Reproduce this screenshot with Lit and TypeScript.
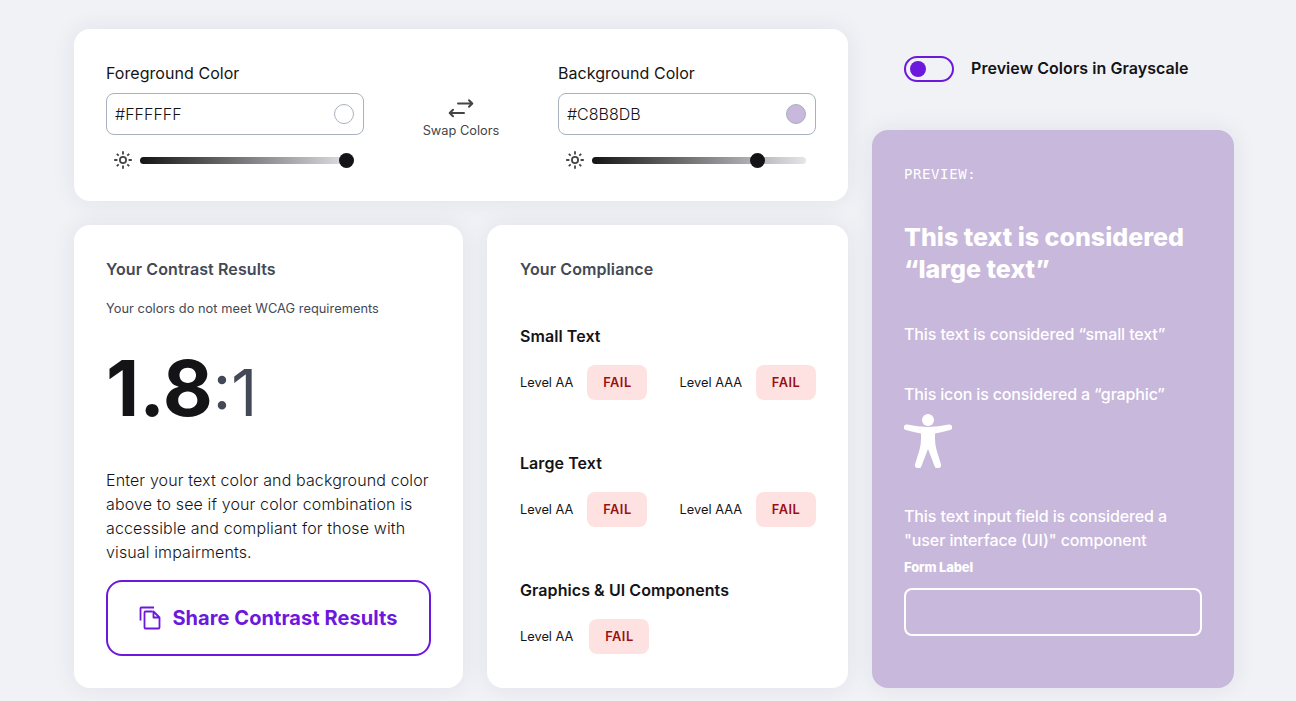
import { LitElement, html, css, svg } from "lit";
import { customElement, property, state } from "lit/decorators.js";

const sunIcon = svg`
  <circle cx="9" cy="9" r="3.1"></circle>
  <path d="M9 0.2V3.4M9 14.6V17.8M0.2 9H3.4M14.6 9H17.8M2.8 2.8L4.7 4.7M13.3 13.3L15.2 15.2M15.2 2.8L13.3 4.7M4.7 13.3L2.8 15.2"></path>
`;

@customElement("color-field")
export class ColorField extends LitElement {
  @property() label = "";
  @property() value = "";
  @property({ type: Number }) lightness = 1;

  static styles = css`
    :host { display: block; width: 258px; }
    .label { display: block; font-size: 16px; line-height: 24px; color: #141416; letter-spacing: 0.05px; }
    .box {
      display: flex; align-items: center; justify-content: space-between; box-sizing: border-box;
      height: 42px; margin-top: 8px; padding: 0 9px 0 8px; border: 1px solid #a9b0be; border-radius: 8px;
      font-size: 16px; font-weight: 300; color: #141416;
    }
    .swatch { box-sizing: border-box; width: 20px; height: 20px; border: 1px solid #a9b0be; border-radius: 50%; }
    .slider { display: flex; align-items: center; gap: 8px; height: 18px; margin-top: 16px; padding: 0 10px 0 8px; }
    .sun { width: 18px; height: 18px; fill: none; stroke: #454545; stroke-width: 1.8; }
    .track {
      display: flex; align-items: center; flex: 1; height: 7px; margin-top: 1px; border-radius: 4px;
      background: linear-gradient(90deg, #141416, #e5e6ea);
    }
    .thumb { width: 15px; height: 15px; border-radius: 50%; background: #141416; }
  `;

  render() {
    return html`
      <span class="label">${this.label}</span>
      <div class="box">
        <span>${this.value}</span>
        <span class="swatch" style="background:${this.value}"></span>
      </div>
      <div class="slider">
        <svg class="sun" viewBox="0 0 18 18">${sunIcon}</svg>
        <div class="track">
          <span class="thumb" style="margin-left:${this.lightness * 199}px"></span>
        </div>
      </div>
    `;
  }
}

interface Criterion { name: string; levels: string[]; }

@customElement("app-root")
export class AppRoot extends LitElement {
  @state() private criteria: Criterion[] = [
    { name: "Small Text", levels: ["Level AA", "Level AAA"] },
    { name: "Large Text", levels: ["Level AA", "Level AAA"] },
    { name: "Graphics & UI Components", levels: ["Level AA"] },
  ];

  static styles = css`
    :host {
      display: block; box-sizing: border-box; height: 701px; overflow: hidden;
      padding: 29px 62px 13px 74px; background: #f0f2f6; color: #141416;
      font-family: Inter, sans-serif; font-size: 16px; line-height: 24px;
    }
    .page { display: grid; grid-template-columns: 774px 362px; gap: 24px; }
    .card { box-sizing: border-box; padding: 32px; border-radius: 16px; background: #fff; box-shadow: 0 0 24px rgba(61, 35, 61, 0.08); }
    .left { display: flex; flex-direction: column; gap: 24px; }
    .pickers { display: flex; justify-content: space-between; height: 172px; }
    .swap { display: flex; flex-direction: column; align-items: center; padding-top: 37px; color: #454545; font-size: 12.8px; line-height: 20px; }
    .arrows { width: 26px; height: 20px; margin-bottom: 3px; fill: none; stroke: #454545; stroke-width: 2; stroke-linecap: round; stroke-linejoin: round; }
    .lower { display: grid; grid-template-columns: 389px 361px; gap: 24px; height: 463px; }
    .title { margin: 0; font-size: 16px; line-height: 24px; font-weight: 600; color: #434956; letter-spacing: 0.1px; }
    .note { margin: 18px 0 0; font-size: 12.8px; line-height: 20px; color: #434956; letter-spacing: 0.04px; }
    .ratio { height: 80px; margin: 29px 0 0; line-height: 80px; white-space: nowrap; }
    .value { font-size: 77px; font-weight: 700; }
    .one { font-size: 64px; font-weight: 400; color: #434956; }
    .copy { margin: 40px 0 0; font-weight: 300; white-space: nowrap; letter-spacing: 0.13px; }
    .share {
      display: flex; align-items: center; justify-content: center; gap: 11px; box-sizing: border-box; width: 325px; height: 76px;
      margin-top: 16px; padding: 0; border: 2px solid #6d18dd; border-radius: 16px; background: #fff;
      color: #6d18dd; font-family: inherit; font-size: 20px; font-weight: 700; letter-spacing: 0.07px;
    }
    .files { width: 22px; height: 24px; fill: none; stroke: #6d18dd; stroke-width: 1.8; stroke-linejoin: round; }
    .comp { padding: 32px 32px 32px 33px; }
    .group { margin-top: 43px; }
    .group + .group { margin-top: 51px; }
    .name { margin: 0; font-size: 16px; line-height: 24px; font-weight: 600; letter-spacing: 0.07px; }
    .row { display: flex; justify-content: space-between; margin-top: 17px; }
    .level { display: flex; align-items: center; gap: 14px; font-size: 12.8px; }
    .level:only-child { gap: 16px; }
    .text { margin-top: 1px; }
    .badge { box-sizing: border-box; width: 60px; height: 35px; border-radius: 8px; background: #fee2e2; color: #991010; font-weight: 600; line-height: 35px; text-align: center; letter-spacing: 0.5px; }
    .toggle { display: flex; align-items: center; gap: 17px; height: 26px; margin: 27px 0 48px 32px; font-weight: 600; white-space: nowrap; letter-spacing: 0.06px; }
    .caption { margin-top: -2px; }
    .switch { display: flex; align-items: center; box-sizing: border-box; width: 50px; height: 26px; padding-left: 4px; border: 2px solid #6d18dd; border-radius: 13px; }
    .knob { width: 16px; height: 16px; border-radius: 50%; background: #6d18dd; }
    .preview { height: 558px; padding: 32px; background: #c8b8db; color: #fff; white-space: nowrap; }
    .tag { display: block; font-family: "DejaVu Sans Mono", monospace; font-size: 14px; line-height: 24px; letter-spacing: 0.6px; }
    .large { margin: 35px 0 0; font-size: 25px; line-height: 32px; font-weight: 800; }
    .small { margin: 37px 0 0; font-weight: 500; letter-spacing: -0.11px; }
    .graphic { margin: 36px 0 0; font-weight: 500; letter-spacing: -0.15px; }
    .person { display: block; width: 48px; height: 54px; margin-top: 8px; fill: #fff; }
    .ui { margin: 36px 0 0; font-weight: 500; letter-spacing: -0.1px; }
    .form { display: block; margin-top: 5px; font-size: 13px; line-height: 20px; font-weight: 800; letter-spacing: -0.15px; }
    .input { box-sizing: border-box; height: 48px; margin-top: 11px; border: 2px solid #fff; border-radius: 8px; }
  `;

  render() {
    return html`
      <main class="page">
        <div class="left">
          <section class="card pickers">
            <color-field label="Foreground Color" value="#FFFFFF" lightness="1"></color-field>
            <div class="swap">
              <svg class="arrows" viewBox="0 0 26 20">
                <path d="M10 5.5H24M21 2.2L24.3 5.5L21 8.8M16 15H2M5 11.7L1.7 15L5 18.3"></path>
              </svg>
              <span>Swap Colors</span>
            </div>
            <color-field label="Background Color" value="#C8B8DB" lightness="0.794"></color-field>
          </section>
          <div class="lower">
            <section class="card">
              <h2 class="title">Your Contrast Results</h2>
              <p class="note">Your colors do not meet WCAG requirements</p>
              <p class="ratio"><span class="value">1.8</span><span class="one">:1</span></p>
              <p class="copy">
                Enter your text color and background color<br />above to see if your color combination is<br />accessible and compliant for those with<br />visual impairments.
              </p>
              <button class="share">
                <svg class="files" viewBox="0 0 22 24">
                  <path d="M1.5 14.5V2.3Q1.5 1.5 2.3 1.5H15M13.5 5.5H6.5Q5.5 5.5 5.5 6.5V21.5Q5.5 22.5 6.5 22.5H19.5Q20.5 22.5 20.5 21.5V11.5L14.5 5.5V11.5H20.5"></path>
                </svg>
                <span>Share Contrast Results</span>
              </button>
            </section>
            <section class="card comp">
              <h2 class="title">Your Compliance</h2>
              ${this.criteria.map(
                (c) => html`
                  <div class="group">
                    <h3 class="name">${c.name}</h3>
                    <div class="row">
                      ${c.levels.map((l) => html`<div class="level"><span class="text">${l}</span><span class="badge">FAIL</span></div>`)}
                    </div>
                  </div>
                `
              )}
            </section>
          </div>
        </div>
        <aside>
          <div class="toggle">
            <span class="switch"><span class="knob"></span></span>
            <span class="caption">Preview Colors in Grayscale</span>
          </div>
          <section class="card preview">
            <span class="tag">PREVIEW:</span>
            <h2 class="large">This text is considered<br />“large text”</h2>
            <p class="small">This text is considered “small text”</p>
            <p class="graphic">This icon is considered a “graphic”</p>
            <svg class="person" viewBox="0 0 48 54">
              <circle cx="24" cy="6" r="6"></circle>
              <path d="M3.2 10.6Q24 15.4 44.8 10.6A2.8 2.8 0 0 1 46 16.1Q38 18.4 31 19.4Q30.6 29 32.4 35.5L36.8 49.8A3.2 3.2 0 0 1 30.6 52.2L24 35L17.4 52.2A3.2 3.2 0 0 1 11.2 49.8L15.6 35.5Q17.4 29 17 19.4Q10 18.4 2 16.1A2.8 2.8 0 0 1 3.2 10.6Z"></path>
            </svg>
            <p class="ui">This text input field is considered a<br />"user interface (UI)" component</p>
            <span class="form">Form Label</span>
            <div class="input"></div>
          </section>
        </aside>
      </main>
    `;
  }
}
